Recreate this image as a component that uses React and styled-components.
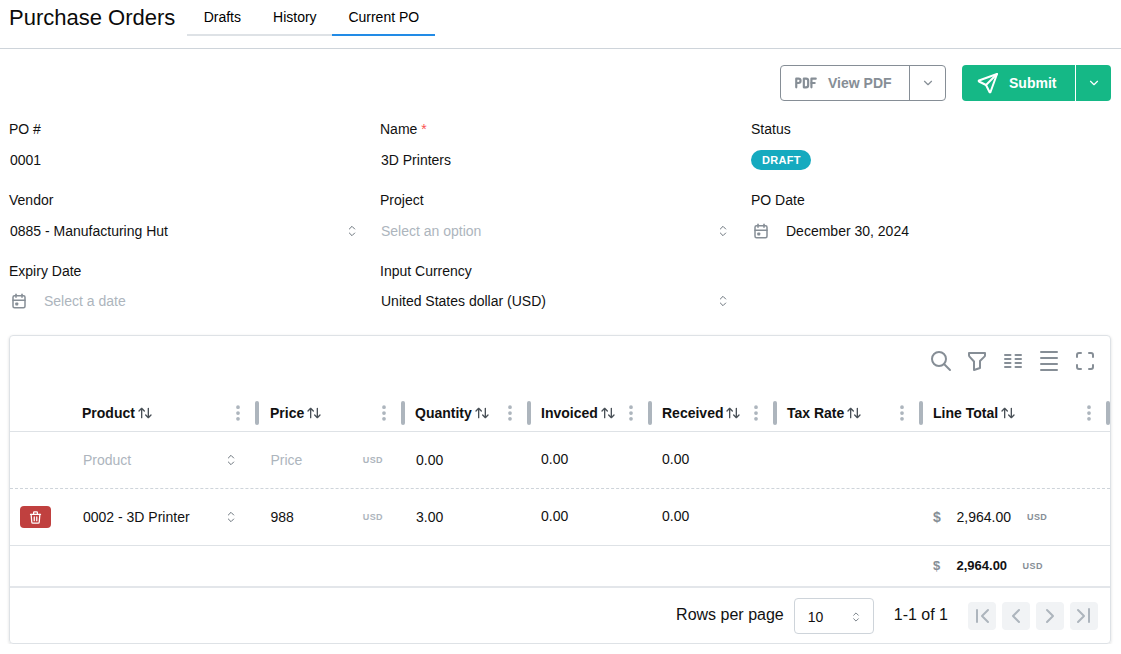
import styled, { createGlobalStyle } from "styled-components";
import {
  TbSelector,
  TbCalendarEvent,
  TbSend,
  TbChevronDown,
  TbPdf,
  TbTrash,
  TbSearch,
  TbFilter,
  TbColumns,
  TbBaselineDensitySmall,
  TbMaximize,
  TbArrowsSort,
  TbDotsVertical,
  TbChevronLeftPipe,
  TbChevronRightPipe,
  TbChevronLeft,
  TbChevronRight,
} from "react-icons/tb";

const GlobalStyle = createGlobalStyle`
  html, body {
    margin: 0;
    background: #fff;
    color: #000;
    font-family: "Liberation Sans", Arial, sans-serif;
    font-size: 14px;
    overflow: hidden;
  }
  * { box-sizing: border-box; }
`;

const Header = styled.header`
  display: flex;
  align-items: flex-start;
  height: 49px;
  padding-left: 9px;
  border-bottom: 1px solid #ced4da;
`;

const Title = styled.h1`
  margin: 5px 12px 0 0;
  font-size: 22px;
  line-height: 26px;
  font-weight: 400;
  color: #0b0b0b;
`;

const Tabs = styled.nav`
  display: flex;
  height: 36px;
`;

const Tab = styled.div`
  display: flex;
  align-items: center;
  justify-content: center;
  width: ${(p) => p.$width}px;
  height: 36px;
  font-size: 14px;
  padding-bottom: 1px;
  border-bottom: 2px solid ${(p) => (p.$active ? "#228be6" : "#dee2e6")};
`;

const Actions = styled.div`
  display: flex;
  justify-content: flex-end;
  gap: 16px;
  padding: 16px 10px 0 0;
`;

const SplitButton = styled.div`
  display: flex;
  height: 36px;
  border-radius: 4px;
  font-weight: 700;
  font-size: 14px;
  color: ${(p) => (p.$primary ? "#fff" : "#868e96")};
  background: ${(p) => (p.$primary ? "#15b886" : "#fff")};
  border: ${(p) => (p.$primary ? "none" : "1px solid #868e96")};
`;

const ButtonMain = styled.div`
  display: flex;
  align-items: center;
  gap: ${(p) => p.$gap}px;
  width: ${(p) => p.$width}px;
  padding-left: ${(p) => p.$pad}px;
`;

const ButtonCaret = styled.div`
  display: flex;
  align-items: center;
  justify-content: center;
  flex: 1;
  width: 36px;
  border-left: 1px solid ${(p) => (p.$primary ? "#fff" : "#868e96")};
`;

const FormGrid = styled.section`
  display: grid;
  grid-template-columns: repeat(3, 371px);
  grid-auto-rows: 71px;
  padding: 20px 0 0 9px;
  height: 234px;
`;

const Field = styled.div`
  display: flex;
  flex-direction: column;
  padding-right: 20px;
`;

const Label = styled.label`
  height: 16px;
  line-height: 16px;
  font-size: 14px;
  color: #111;
`;

const Required = styled.span`
  color: #fa5252;
`;

const Value = styled.div`
  display: flex;
  align-items: center;
  height: 30px;
  margin-top: ${(p) => (p.$tight ? 7 : 8)}px;
  padding-left: 1px;
  color: ${(p) => (p.$muted ? "#adb5bd" : "#111")};
`;

const Grow = styled.span`
  flex: 1;
`;

const CalendarIcon = styled(TbCalendarEvent)`
  color: #868e96;
  margin-right: 16px;
  flex: none;
`;

const Selector = styled(TbSelector)`
  color: #6c757d;
  flex: none;
`;

const Badge = styled.span`
  display: inline-flex;
  align-items: center;
  height: 20px;
  margin-left: -1px;
  padding: 0 10px 0 11px;
  border-radius: 10px;
  background: #15aabf;
  color: #fff;
  font-size: 11px;
  font-weight: 700;
  letter-spacing: 0.3px;
`;

const Card = styled.section`
  margin: 0 10px 0 9px;
  height: 309px;
  border: 1px solid #dee2e6;
  border-radius: 4px;
  box-shadow: 0 1px 3px rgba(0, 0, 0, 0.14);
  overflow: hidden;
`;

const Toolbar = styled.div`
  display: flex;
  justify-content: flex-end;
  align-items: center;
  gap: 12px;
  height: 50px;
  padding: 0 13px 0 0;
  color: #868e96;
`;

const Row = styled.div`
  display: grid;
  grid-template-columns: 61px 188px 146px 126px 121px 125px 146px 187px;
  align-items: center;
  height: ${(p) => p.$height}px;
  padding-top: ${(p) => p.$top || 0}px;
  border-bottom: 1px ${(p) => p.$line || "solid"} ${(p) => p.$color || "#dee2e6"};
`;

const HeadCell = styled.div`
  display: flex;
  align-items: center;
  height: 30px;
  padding-left: ${(p) => p.$pad}px;
  font-weight: 700;
  color: #111;
`;

const SortIcon = styled(TbArrowsSort)`
  margin-left: 2px;
  color: #495057;
`;

const ColumnMenu = styled(TbDotsVertical)`
  margin-left: auto;
  margin-right: 7px;
  color: #adb5bd;
`;

const ResizeHandle = styled.span`
  width: 4px;
  height: 24px;
  border-radius: 2px;
  background: #adb5bd;
`;

const Cell = styled.div`
  display: flex;
  align-items: center;
  padding-left: ${(p) => p.$pad}px;
  padding-right: ${(p) => p.$right || 0}px;
  padding-bottom: ${(p) => (p.$raised ? 2 : 0)}px;
  color: ${(p) => (p.$muted ? "#adb5bd" : "#111")};
`;

const Unit = styled.span`
  margin-left: auto;
  font-size: 9px;
  font-weight: 700;
  letter-spacing: 0.4px;
  color: #adb5bd;
`;

const TotalCell = styled.div`
  display: flex;
  align-items: center;
  padding-left: 10px;
  font-size: ${(p) => (p.$bold ? 13 : 14)}px;
  font-weight: ${(p) => (p.$bold ? 700 : 400)};
  color: #111;
`;

const Dollar = styled.span`
  width: 23.5px;
  font-weight: 700;
  color: #868e96;
`;

const TotalUnit = styled.span`
  margin-left: ${(p) => p.$gap}px;
  font-size: 9px;
  font-weight: 700;
  letter-spacing: 0.4px;
  color: #868e96;
`;

const DeleteButton = styled.button`
  display: flex;
  align-items: center;
  justify-content: center;
  width: 31px;
  height: 22px;
  margin-left: 10px;
  padding: 0;
  border: none;
  border-radius: 4px;
  background: #c0403f;
  color: #fff;
`;

const Footer = styled.footer`
  display: flex;
  align-items: center;
  justify-content: flex-end;
  height: 57px;
  padding-right: 12px;
  border-top: 2px solid #e3e6ea;
  font-size: 16px;
  color: #111;
`;

const FooterText = styled.span`
  margin-bottom: 2px;
  margin-left: ${(p) => p.$left || 0}px;
`;

const PageSize = styled.div`
  display: flex;
  align-items: center;
  justify-content: space-between;
  width: 80px;
  height: 36px;
  margin: 0 20px 0 10px;
  padding: 2px 10px 0 13px;
  border: 1px solid #ced4da;
  border-radius: 4px;
  font-size: 14px;
`;

const PageNav = styled.div`
  display: flex;
  gap: 6px;
  margin-left: 20px;
`;

const PageButton = styled.div`
  display: flex;
  align-items: center;
  justify-content: center;
  width: 28px;
  height: 28px;
  border-radius: 4px;
  background: #f1f3f5;
  color: #adb5bd;
`;

const fields = [
  { label: "PO #", value: "0001" },
  { label: "Name", value: "3D Printers", required: true },
  { label: "Status", badge: "DRAFT" },
  { label: "Vendor", value: "0885 - Manufacturing Hut", select: true },
  { label: "Project", value: "Select an option", select: true, muted: true },
  { label: "PO Date", value: "December 30, 2024", date: true },
  { label: "Expiry Date", value: "Select a date", date: true, muted: true, tight: true },
  { label: "Input Currency", value: "United States dollar (USD)", select: true, tight: true },
];

const columns = [
  { name: "Product", pad: 11 },
  { name: "Price", pad: 11 },
  { name: "Quantity", pad: 10 },
  { name: "Invoiced", pad: 10 },
  { name: "Received", pad: 10 },
  { name: "Tax Rate", pad: 10 },
  { name: "Line Total", pad: 10 },
];

function FormField({ field }) {
  return (
    <Field>
      <Label>
        {field.label}
        {field.required && <Required> *</Required>}
      </Label>
      <Value $muted={field.muted} $tight={field.tight}>
        {field.date && <CalendarIcon size={18} />}
        {field.badge ? <Badge>{field.badge}</Badge> : <Grow>{field.value}</Grow>}
        {field.select && <Selector size={16} strokeWidth={1.5} />}
      </Value>
    </Field>
  );
}

function App() {
  return (
    <>
      <GlobalStyle />
      <Header>
        <Title>Purchase Orders</Title>
        <Tabs>
          <Tab $width={70}>Drafts</Tab>
          <Tab $width={75}>History</Tab>
          <Tab $width={103} $active>
            Current PO
          </Tab>
        </Tabs>
      </Header>

      <Actions>
        <SplitButton>
          <ButtonMain $width={128} $gap={9} $pad={12}>
            <TbPdf size={26} />
            View PDF
          </ButtonMain>
          <ButtonCaret>
            <TbChevronDown size={14} />
          </ButtonCaret>
        </SplitButton>
        <SplitButton $primary>
          <ButtonMain $width={113} $gap={9} $pad={14}>
            <TbSend size={24} />
            Submit
          </ButtonMain>
          <ButtonCaret $primary>
            <TbChevronDown size={14} />
          </ButtonCaret>
        </SplitButton>
      </Actions>

      <FormGrid>
        {fields.map((field) => (
          <FormField key={field.label} field={field} />
        ))}
      </FormGrid>

      <Card>
        <Toolbar>
          <TbSearch size={24} />
          <TbFilter size={24} />
          <TbColumns size={24} />
          <TbBaselineDensitySmall size={24} />
          <TbMaximize size={24} />
        </Toolbar>

        <Row $height={46} $top={8}>
          <span />
          {columns.map((col) => (
            <HeadCell key={col.name} $pad={col.pad}>
              {col.name}
              <SortIcon size={16} />
              <ColumnMenu size={20} strokeWidth={2.5} />
              <ResizeHandle />
            </HeadCell>
          ))}
        </Row>

        <Row $height={57} $line="dashed" $color="#ced4da">
          <span />
          <Cell $pad={12} $muted $right={20}>
            Product
            <Grow />
            <Selector size={16} strokeWidth={1.5} />
          </Cell>
          <Cell $pad={11.5} $muted $right={22}>
            Price
            <Unit>USD</Unit>
          </Cell>
          <Cell $pad={11}>0.00</Cell>
          <Cell $pad={10} $raised>0.00</Cell>
          <Cell $pad={10} $raised>0.00</Cell>
        </Row>

        <Row $height={57}>
          <DeleteButton>
            <TbTrash size={15} />
          </DeleteButton>
          <Cell $pad={12} $right={20}>
            0002 - 3D Printer
            <Grow />
            <Selector size={16} strokeWidth={1.5} />
          </Cell>
          <Cell $pad={11.5} $right={22}>
            988
            <Unit>USD</Unit>
          </Cell>
          <Cell $pad={11}>3.00</Cell>
          <Cell $pad={10} $raised>0.00</Cell>
          <Cell $pad={10} $raised>0.00</Cell>
          <span />
          <TotalCell>
            <Dollar>$</Dollar>
            2,964.00
            <TotalUnit $gap={16}>USD</TotalUnit>
          </TotalCell>
        </Row>

        <Row $height={40} $color="transparent">
          <span />
          <span />
          <span />
          <span />
          <span />
          <span />
          <span />
          <TotalCell $bold>
            <Dollar>$</Dollar>
            2,964.00
            <TotalUnit $gap={15.5}>USD</TotalUnit>
          </TotalCell>
        </Row>

        <Footer>
          <FooterText>Rows per page</FooterText>
          <PageSize>
            10
            <Selector size={14} strokeWidth={1.5} />
          </PageSize>
          <FooterText>1-1 of 1</FooterText>
          <PageNav>
            <PageButton>
              <TbChevronLeftPipe size={24} />
            </PageButton>
            <PageButton>
              <TbChevronLeft size={24} />
            </PageButton>
            <PageButton>
              <TbChevronRight size={24} />
            </PageButton>
            <PageButton>
              <TbChevronRightPipe size={24} />
            </PageButton>
          </PageNav>
        </Footer>
      </Card>
    </>
  );
}

export default App;
